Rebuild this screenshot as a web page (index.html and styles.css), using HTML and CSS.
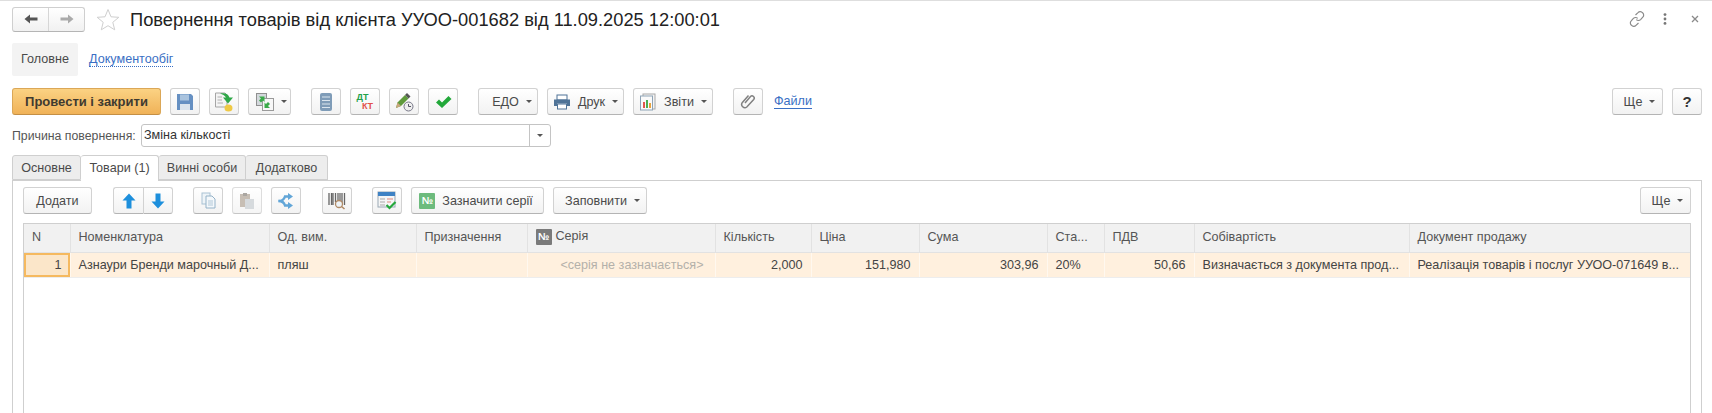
FILE: index.html
```html
<!DOCTYPE html>
<html lang="uk">
<head>
  <meta charset="UTF-8">
  <title>Повернення товарів від клієнта</title>
  <link rel="stylesheet" href="styles.css">
</head>
<body>

  <!-- Title row -->
  <div class="title-row">
    <div class="nav-group">
      <button class="nav-btn">
        <svg width="14" height="12" viewBox="0 0 14 12"><path d="M0.500 6 6 1.500V4.500H13.500V7.500H6V10.500Z" fill="#555"/></svg>
      </button>
      <button class="nav-btn">
        <svg width="14" height="12" viewBox="0 0 14 12"><path d="M13.500 6 8 1.500V4.500H0.500V7.500H8V10.500Z" fill="#aaa"/></svg>
      </button>
    </div>
    <svg class="star" width="24" height="23" viewBox="0 0 24 23"><path d="M12 1.500 15 8.800 22.800 9.300 16.800 14.300 18.700 21.800 12 17.700 5.300 21.800 7.200 14.300 1.200 9.300 9 8.800Z" fill="#fff" stroke="#cfcfcf"/></svg>
    <div class="doc-title">Повернення товарів від клієнта УУОО-001682 від 11.09.2025 12:00:01</div>
    <div class="win-icons">
      <svg width="18" height="18" viewBox="0 0 18 18" fill="none" stroke="#8a8a8a" stroke-width="1.200"><path d="M7.500 5 10 2.600a3 3 0 0 1 4.600 0.200 3 3 0 0 1 0.200 4.400L12.600 9.600a3 3 0 0 1-4.300 0"/><path d="M10.500 13 8 15.400a3 3 0 0 1-4.600-0.200 3 3 0 0 1-0.200-4.400L5.400 8.400a3 3 0 0 1 4.300 0"/></svg>
      <svg width="4" height="12" viewBox="0 0 4 12" fill="#777"><circle cx="2" cy="1.600" r="1.400"/><circle cx="2" cy="6" r="1.400"/><circle cx="2" cy="10.400" r="1.400"/></svg>
      <svg class="win-close" width="8" height="8" viewBox="0 0 8 8" stroke="#8a8a8a" stroke-width="1.300"><path d="M1 1 7 7M7 1 1 7"/></svg>
    </div>
  </div>

  <!-- Section links -->
  <div class="sections">
    <div class="section active">Головне</div>
    <a class="link section-link">Документообіг</a>
  </div>

  <!-- Command bar -->
  <div class="toolbar main-bar">
    <button class="btn primary">Провести і закрити</button>
    <button class="btn icon">
      <svg width="18" height="18" viewBox="0 0 18 18"><path d="M1 1H15L17 3V17H1Z" fill="#6690c2"/><rect x="4" y="1.500" width="9" height="6" fill="#a9c3de"/><rect x="4" y="11" width="10" height="6" fill="#dbe4ed"/></svg>
    </button>
    <button class="btn icon">
      <svg width="20" height="20" viewBox="0 0 20 20"><path d="M1.500 1H11L13 3V15H1.500Z" fill="#f4f4f4" stroke="#a5a5a5"/><path d="M3.500 5H8M3.500 8H8M3.500 11H9" stroke="#b0b0b0"/><ellipse cx="14.500" cy="16" rx="4" ry="3.500" fill="#efc945"/><path d="M6 1.500C11 0.500 14.500 2 15.500 5.500L19 5.500 14 11.500 9 5.500 12 5.500C11 3.600 8.500 2.200 6 1.500Z" fill="#2fa848"/></svg>
    </button>
    <button class="btn icon-menu">
      <svg width="20" height="20" viewBox="0 0 20 20"><rect x="1.500" y="1.500" width="10" height="12" fill="#d3d8dc" stroke="#8f8f8f"/><rect x="7.500" y="6.500" width="11" height="12" fill="#f7f7f7" stroke="#9a9a9a"/><path d="M4 4.500H9.500V10L8 8.500 6 10.500 4 8.500 6 6.500Z" fill="#3aaa4a"/><path d="M15 16H9.500V10.500L11 12 13 10 15 12 13 14Z" fill="#3aaa4a"/></svg>
      <i class="caret"></i>
    </button>
    <button class="btn icon gap-left">
      <svg width="14" height="20" viewBox="0 0 14 20"><rect x="1" y="1" width="12" height="18" rx="2" fill="#7f9cb8"/><path d="M3 5H11M3 8.500H11M3 12H11M3 15.500H11" stroke="#dbe5ee" stroke-width="1.200"/></svg>
    </button>
    <button class="btn icon dtkt"><span class="dt">ДТ</span><span class="kt">КТ</span></button>
    <button class="btn icon">
      <svg width="20" height="20" viewBox="0 0 20 20"><path d="M2 16 3.500 10.500 11 3 14.500 6.500 7 14Z" fill="#5f9a3c"/><path d="M11 3 13 1 16.500 4.500 14.500 6.500Z" fill="#555"/><path d="M2 16 3.500 10.500 7 14Z" fill="#c9a77c"/><circle cx="14.500" cy="14.500" r="4.500" fill="#eee" stroke="#778"/><path d="M14.500 12V14.500H17" stroke="#556" fill="none"/></svg>
    </button>
    <button class="btn icon">
      <svg width="17" height="14" viewBox="0 0 17 14"><path d="M1 7.500 4 4.500 7 7.500 13.500 1 16.500 4 7 13Z" fill="#22a83a"/></svg>
    </button>
    <button class="btn menu gap-left edo">ЕДО<i class="caret"></i></button>
    <button class="btn menu druk">
      <svg width="18" height="16" viewBox="0 0 18 16"><rect x="4" y="1" width="10" height="5" fill="#fff" stroke="#4f7397"/><path d="M1 5.500H17V12H14V9.500H4V12H1Z" fill="#4f7397"/><rect x="4.500" y="10" width="9" height="5" fill="#fff" stroke="#4f7397"/></svg>
      Друк<i class="caret"></i>
    </button>
    <button class="btn menu zvity">
      <svg width="18" height="18" viewBox="0 0 18 18"><rect x="4" y="1" width="12" height="15" fill="#f4f4f4" stroke="#a8a8a8"/><rect x="1.500" y="3" width="12" height="14" fill="#fafafa" stroke="#8ea3b5"/><rect x="4" y="9" width="2" height="6" fill="#e2574c"/><rect x="7" y="7" width="2" height="8" fill="#4caf50"/><rect x="10" y="10" width="2" height="5" fill="#e8a33d"/></svg>
      Звіти<i class="caret"></i>
    </button>
    <button class="btn icon gap-left">
      <svg width="16" height="17" viewBox="0 0 16 17" fill="none" stroke="#808080" stroke-width="1.500"><path d="M5 10 10.500 3.500a2.200 2.200 0 0 1 3.200 3L6.800 14a3.200 3.200 0 0 1-4.600-4.300L8.500 2.500"/></svg>
    </button>
    <a class="link files-link">Файли</a>
    <button class="btn menu more">Ще<i class="caret"></i></button>
    <button class="btn icon help">?</button>
  </div>

  <!-- Return reason -->
  <div class="field-row">
    <label class="field-label">Причина повернення:</label>
    <div class="combo">
      <div class="combo-value">Зміна кількості</div>
      <div class="combo-drop"><i class="caret"></i></div>
    </div>
  </div>

  <!-- Tabs -->
  <div class="tabs">
    <div class="tab t1">Основне</div>
    <div class="tab t2 active">Товари (1)</div>
    <div class="tab t3">Винні особи</div>
    <div class="tab t4">Додатково</div>
  </div>

  <div class="panel">
    <div class="toolbar">
      <button class="btn add">Додати</button>
      <div class="btn-group gap-wide">
        <button class="btn icon">
          <svg width="14" height="16" viewBox="0 0 14 16"><path d="M7 0.500 13.500 7.500H9.500V15.500H4.500V7.500H0.500Z" fill="#1d8fdc"/></svg>
        </button>
        <button class="btn icon">
          <svg width="14" height="16" viewBox="0 0 14 16"><path d="M7 15.500 13.500 8.500H9.500V0.500H4.500V8.500H0.500Z" fill="#1d8fdc"/></svg>
        </button>
      </div>
      <button class="btn icon gap-left">
        <svg width="15" height="17" viewBox="0 0 15 17"><rect x="1" y="1" width="8" height="11" fill="#eef4f8" stroke="#a9c2d4"/><path d="M5 4H11L14 7V16H5Z" fill="#f4f8fb" stroke="#94b2c8"/><path d="M7 9H12M7 11H12M7 13H12" stroke="#b2c8d8"/></svg>
      </button>
      <button class="btn icon dim">
        <svg width="16" height="18" viewBox="0 0 16 18"><rect x="1" y="2" width="10" height="13" fill="#b5a99c"/><rect x="4" y="1" width="4" height="3" fill="#8f8a84"/><rect x="6" y="7" width="9" height="10" fill="#c9ced2"/></svg>
      </button>
      <button class="btn icon">
        <svg width="18" height="18" viewBox="0 0 18 18" fill="none" stroke="#62a6d8" stroke-width="2.400"><path d="M1.500 9C5 9 7 8 8 4.500H12"/><path d="M1.500 9C5 9 7 10 8 13.500H12"/><path d="M11 1 16 4.500 11 8Z M11 10 16 13.500 11 17Z" fill="#62a6d8" stroke="none"/></svg>
      </button>
      <button class="btn icon gap-wide">
        <svg width="18" height="18" viewBox="0 0 18 18"><path d="M1 1V13M3.500 1V13M5 1V13M7.500 1V10M10 1V8M12 1V8M14 1V13M16.500 1V13" stroke="#666" stroke-width="1.300"/><circle cx="11" cy="12" r="3.500" fill="#eef4f8" stroke="#b08a66" stroke-width="1.300"/><path d="M13.500 14.500 16.500 17" stroke="#b08a66" stroke-width="1.600"/></svg>
      </button>
      <button class="btn icon gap-left">
        <svg width="20" height="19" viewBox="0 0 20 19"><rect x="1" y="1" width="17" height="15" fill="#f6f6f6" stroke="#9aa8b4"/><rect x="1" y="1" width="17" height="4" fill="#3f82c4"/><path d="M3 8H8M3 11H8M3 14H8" stroke="#a9a9a9"/><path d="M10 8H16M10 11H14" stroke="#e0897c"/><path d="M9.500 14 12.500 17 18.500 11" fill="none" stroke="#25a83c" stroke-width="2.200"/></svg>
      </button>
      <button class="btn menu series">
        <span class="badge green">№</span>Зазначити серії
      </button>
      <button class="btn menu fill">Заповнити<i class="caret"></i></button>
      <button class="btn menu more">Ще<i class="caret"></i></button>
    </div>

    <div class="grid-box">
      <table class="grid">
        <thead>
          <tr>
            <th>N</th>
            <th>Номенклатура</th>
            <th>Од. вим.</th>
            <th>Призначення</th>
            <th><span class="badge gray">№</span>Серія</th>
            <th>Кількість</th>
            <th>Ціна</th>
            <th>Сума</th>
            <th>Ста...</th>
            <th>ПДВ</th>
            <th>Собівартість</th>
            <th>Документ продажу</th>
          </tr>
        </thead>
        <tbody>
          <tr>
            <td class="num current">1</td>
            <td>Азнаури Бренди марочный Д...</td>
            <td>пляш</td>
            <td></td>
            <td class="placeholder">&lt;серія не зазначається&gt;</td>
            <td class="num">2,000</td>
            <td class="num">151,980</td>
            <td class="num">303,96</td>
            <td>20%</td>
            <td class="num">50,66</td>
            <td>Визначається з документа прод...</td>
            <td>Реалізація товарів і послуг УУОО-071649 в...</td>
          </tr>
        </tbody>
      </table>
    </div>
  </div>

</body>
</html>
```

FILE: styles.css
```css
* {
  box-sizing: border-box;
}

html, body {
  height: 100%;
}

body {
  margin: 0;
  display: flex;
  flex-direction: column;
  overflow: hidden;
  background: #fff;
  border-top: 1px solid #dedede;
  font-family: "Liberation Sans", Arial, sans-serif;
  font-size: 12.6px;
  color: #4a4a4a;
}

/* Title row */
.title-row {
  display: flex;
  align-items: center;
  height: 40px;
  padding: 0 13px 4px 12px;
  flex: none;
}

.nav-group {
  display: flex;
  width: 73px;
  height: 25px;
  border: 1px solid #cfcfcf;
  border-bottom-color: #b5b5b5;
  border-radius: 3px;
  background: linear-gradient(#fff, #f1f1f1);
}

.nav-btn {
  flex: 1;
  padding: 0;
  border: 0;
  background: none;
  display: flex;
  align-items: center;
  justify-content: center;
}

.nav-btn + .nav-btn {
  border-left: 1px solid #d6d6d6;
}

.star {
  margin-left: 11px;
}

.doc-title {
  margin: 2px 0 0 10px;
  font-size: 18.3px;
  color: #222;
  white-space: nowrap;
}

.win-icons {
  margin-left: auto;
  display: flex;
  align-items: center;
  gap: 17px;
}

.win-close {
  margin-left: 7px;
}

/* Sections */
.sections {
  display: flex;
  align-items: center;
  height: 33px;
  margin: 2px 0 0 12px;
  flex: none;
}

.section {
  height: 33px;
  width: 66px;
  line-height: 33px;
  text-align: center;
  background: #f3f3f3;
  border-radius: 2px;
}

.section-link {
  margin-left: 11px;
}

.link {
  color: #3a6fc4;
  border-bottom: 1px dotted #3a6fc4;
  line-height: 14px;
}

/* Toolbars */
.toolbar {
  display: flex;
  align-items: center;
  gap: 9px;
  height: 27px;
  flex: none;
}

.main-bar {
  margin: 12px 10px 0 12px;
}

.btn {
  height: 27px;
  padding: 0;
  display: flex;
  align-items: center;
  justify-content: center;
  flex: none;
  border: 1px solid #d2d2d2;
  border-bottom-color: #b4b4b4;
  border-radius: 3px;
  background: linear-gradient(#fff, #f2f2f2);
  font-family: inherit;
  font-size: inherit;
  color: #4a4a4a;
}

.btn.icon {
  width: 30px;
}

.icon-menu {
  width: 43px;
  gap: 6px;
  padding-left: 2px;
}

.gap-left {
  margin-left: 11px;
}

.gap-wide {
  margin-left: 12px;
}

.primary {
  width: 149px;
  border-color: #dba757;
  border-bottom-color: #c48f45;
  background: linear-gradient(#fbd283, #f0b258);
  font-size: 13px;
  font-weight: bold;
  color: #3f3a30;
}

.menu {
  gap: 7px;
}

.edo {
  width: 60px;
  padding-left: 8px;
}

.druk {
  width: 77px;
}

.zvity {
  width: 80px;
}

.more {
  width: 51px;
  margin-left: auto;
  padding-left: 4px;
}

.help {
  font-size: 15px;
  font-weight: bold;
  color: #333;
}

.files-link {
  margin-left: 2px;
  border-bottom-style: solid;
}

.dim {
  opacity: 0.75;
}

.caret {
  display: inline-block;
  width: 0;
  height: 0;
  border-left: 3px solid transparent;
  border-right: 3px solid transparent;
  border-top: 3px solid #555;
}

.dtkt {
  flex-direction: column;
  align-items: center;
  font-size: 9px;
  font-weight: bold;
  line-height: 9px;
}

.dt {
  color: #23a24a;
  margin-right: 5px;
}

.kt {
  color: #e2504a;
  margin-left: 5px;
}

.btn-group {
  display: flex;
}

.btn-group .btn:first-child {
  border-right: 0;
  border-radius: 3px 0 0 3px;
}

.btn-group .btn:last-child {
  border-radius: 0 3px 3px 0;
}

/* Reason field */
.field-row {
  display: flex;
  align-items: center;
  margin: 9px 0 0 12px;
  height: 23px;
  flex: none;
}

.field-label {
  width: 129px;
  font-size: 12.3px;
  color: #555;
  white-space: nowrap;
}

.combo {
  display: flex;
  width: 410px;
  height: 23px;
  border: 1px solid #c4c4c4;
  border-radius: 3px;
  color: #333;
}

.combo-value {
  flex: 1;
  line-height: 21px;
  padding-left: 2px;
}

.combo-drop {
  width: 21px;
  border-left: 1px solid #c4c4c4;
  display: flex;
  align-items: center;
  justify-content: center;
}

/* Tabs */
.tabs {
  display: flex;
  height: 26px;
  margin: 8px 0 0 12px;
  flex: none;
  position: relative;
  z-index: 1;
}

.tab {
  height: 25px;
  line-height: 25px;
  text-align: center;
  background: #ededed;
  border: 1px solid #cfcfcf;
  border-left: 0;
  border-radius: 3px 3px 0 0;
}

.t1 {
  width: 69px;
  border-left: 1px solid #cfcfcf;
}

.t2 {
  width: 78px;
}

.t3 {
  width: 87px;
}

.t4 {
  width: 82px;
}

.tab.active {
  height: 26px;
  background: #fff;
  border-bottom: 0;
}

.panel {
  flex: 1;
  min-height: 0;
  display: flex;
  flex-direction: column;
  margin: -1px 10px 0 12px;
  padding: 6px 10px 0;
  border: 1px solid #cfcfcf;
  border-bottom: 0;
}

.add {
  width: 69px;
}

.series {
  width: 133px;
  margin-left: 0;
  padding-right: 3px;
}

.fill {
  width: 94px;
  padding-left: 5px;
}

.badge {
  display: inline-block;
  width: 16px;
  height: 16px;
  line-height: 16px;
  text-align: center;
  font-size: 10px;
  font-weight: bold;
  color: #fff;
  border-radius: 1px;
}

.green {
  background: #6dbb7d;
}

.gray {
  background: #7a7a7a;
  margin-right: 4px;
}

/* Table */
.grid-box {
  flex: 1;
  min-height: 0;
  margin-top: 9px;
  border: 1px solid #cfcfcf;
  border-bottom: 0;
}

.grid {
  width: 100%;
  table-layout: fixed;
  border-collapse: collapse;
}

.grid th {
  height: 28px;
  padding: 0 8px 2px;
  text-align: left;
  font-weight: normal;
  background: #f1f1f1;
  color: #555;
  border-right: 1px solid #e2e2e2;
  border-bottom: 1px solid #e2e2e2;
  white-space: nowrap;
  overflow: hidden;
}

.grid th:last-child, .grid td:last-child {
  border-right: 0;
}

.grid th:nth-child(1) { width: 46px; }
.grid th:nth-child(2) { width: 199px; }
.grid th:nth-child(3) { width: 147px; }
.grid th:nth-child(4) { width: 111px; }
.grid th:nth-child(5) { width: 188px; }
.grid th:nth-child(6) { width: 96px; }
.grid th:nth-child(7) { width: 108px; }
.grid th:nth-child(8) { width: 128px; }
.grid th:nth-child(9) { width: 57px; }
.grid th:nth-child(10) { width: 90px; }
.grid th:nth-child(11) { width: 215px; }

.grid td {
  height: 25px;
  padding: 0 8px;
  background: #fff0de;
  color: #444;
  border-right: 1px solid #fff8ef;
  border-bottom: 1px solid #ededed;
  white-space: nowrap;
  overflow: hidden;
}

.grid .num {
  text-align: right;
}

.grid .current {
  background: #fbe6c9;
  box-shadow: inset 0 0 0 2px #f5b95f;
}

.grid .placeholder {
  padding-right: 11px;
  text-align: right;
  color: #b4b0aa;
}
```
